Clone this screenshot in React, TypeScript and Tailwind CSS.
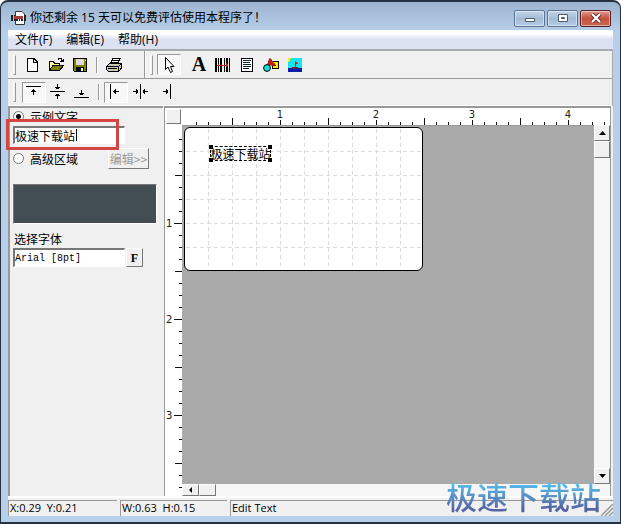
import { useLayoutEffect, useRef, useState } from "react";
import type { ReactNode } from "react";
import clsx from "clsx";

const PPI = 96;
const STEP = 12;
const MENUS = ["文件(F)", "编辑(E)", "帮助(H)"];

function ToolButton({ label, pressed, children }: { label: string; pressed?: boolean; children: ReactNode }) {
    return (
        <button
            type="button"
            aria-label={label}
            aria-pressed={pressed}
            className={clsx(
                "flex h-[21px] w-6 shrink-0 items-center justify-center",
                pressed && "border border-t-[#999] border-l-[#999] border-r-white border-b-white bg-[#f8f8f8]"
            )}
        >
            <svg width="16" height="16" viewBox="0 0 16 16" shapeRendering="crispEdges" className="shrink-0 overflow-visible">
                {children}
            </svg>
        </button>
    );
}

function Grip() {
    return <span className="h-5 w-[3px] shrink-0 border border-t-white border-l-white border-r-[#999] border-b-[#999]" />;
}

function Separator() {
    return <span className="mx-1 h-4 w-0.5 shrink-0 border-r border-l border-r-white border-l-[#999]" />;
}

// Number of ruler ticks that fit along the measured side of an element
function useTicks(side: "width" | "height") {
    const ref = useRef<HTMLDivElement>(null);
    const [count, setCount] = useState(0);

    useLayoutEffect(() => {
        const el = ref.current;
        if (!el) return;
        const measure = () => setCount(Math.floor((el.getBoundingClientRect()[side] - 6) / STEP));
        measure();
        const observer = new ResizeObserver(measure);
        observer.observe(el);
        return () => observer.disconnect();
    }, [side]);

    return { ref, ticks: Array.from({ length: Math.max(count, 0) }, (_, i) => i + 1) };
}

function HorizontalRuler() {
    const { ref, ticks } = useTicks("width");
    return (
        <div ref={ref} className="col-span-2 overflow-hidden">
            <svg width="100%" height="17" className="block">
                {ticks.map((n) => {
                    const x = 2 + n * STEP;
                    const top = n % 8 === 0 ? 12 : n % 4 === 0 ? 10 : 14;
                    return (
                        <g key={n}>
                            <rect x={x} y={top} width="1" height={17 - top} fill="#111" />
                            {n % 8 === 0 && (
                                <text x={x} y="10" textAnchor="middle" fontSize="10" fontFamily="'DejaVu Sans', sans-serif" fill="#222">
                                    {(n * STEP) / PPI}
                                </text>
                            )}
                        </g>
                    );
                })}
            </svg>
        </div>
    );
}

function VerticalRuler() {
    const { ref, ticks } = useTicks("height");
    return (
        <div ref={ref} className="relative row-span-2 overflow-hidden">
            <svg width="17" height="100%" className="absolute inset-0 block">
                {ticks.map((n) => {
                    const y = 2 + n * STEP;
                    const left = n % 8 === 0 ? 9 : n % 4 === 0 ? 10 : 14;
                    return (
                        <g key={n}>
                            <rect x={left} y={y} width={17 - left} height="1" fill="#111" />
                            {n % 8 === 0 && (
                                <text x="1" y={y + 4} fontSize="10" fontFamily="'DejaVu Sans', sans-serif" fill="#222">
                                    {(n * STEP) / PPI}
                                </text>
                            )}
                        </g>
                    );
                })}
            </svg>
        </div>
    );
}

function LabelCanvas() {
    const cols = [1, 2, 3, 4, 5, 6, 7, 8, 9];
    const rows = [1, 2, 3, 4, 5];
    return (
        <div className="relative min-h-0 min-w-0 overflow-hidden border-t border-[#999] bg-[#aaa]">
            {/* label sheet */}
            <div className="absolute top-px left-0.5 h-[144px] w-[239px] rounded-md border border-black bg-white">
                <svg width="237" height="142" className="block" shapeRendering="crispEdges" stroke="#dcdcdc" strokeDasharray="4 3">
                    {cols.map((c) => (
                        <path key={c} d={`M${c * 24 - 0.5} 1V141`} />
                    ))}
                    {rows.map((r) => (
                        <path key={r} d={`M1 ${r * 24 - 0.5}H236`} />
                    ))}
                </svg>
            </div>
            {/* selected text object */}
            <div className="absolute top-5 left-7 flex h-[15px] w-[61px] items-center justify-center border border-dashed border-black">
                <span className="text-[12px] leading-3 whitespace-nowrap">极速下载站</span>
                <i className="absolute -top-0.5 -left-0.5 size-1 bg-black" />
                <i className="absolute -top-0.5 -right-0.5 size-1 bg-black" />
                <i className="absolute -bottom-0.5 -left-0.5 size-1 bg-black" />
                <i className="absolute -right-0.5 -bottom-0.5 size-1 bg-black" />
            </div>
        </div>
    );
}

const RAISED = "border border-t-white border-l-white border-r-[#777] border-b-[#777] bg-[#f0f0f0]";
const SUNKEN = "border-t-2 border-l-2 border-r border-b border-t-[#777] border-l-[#777] border-r-white border-b-white";

function Sidebar() {
    return (
        <aside className="flex w-[155px] shrink-0 flex-col border-t-2 border-l-2 border-t-[#999] border-l-[#999] bg-[#f0f0f0] pl-[3px]">
            <div className="flex h-[13px] items-start overflow-hidden">
                <label className="flex items-center gap-1.5 leading-[17px]">
                    <input
                        type="radio"
                        name="source"
                        defaultChecked
                        className="size-[11px] appearance-none rounded-full border border-[#777] bg-white bg-[radial-gradient(circle,#000_2px,transparent_3px)]"
                    />
                    示例文字
                </label>
            </div>
            <div className="relative mt-[5px]">
                <input
                    aria-label="示例文字"
                    defaultValue="极速下载站"
                    className={clsx("block h-[18px] w-[112px] bg-white text-[12px] leading-[14px] text-black outline-none", SUNKEN)}
                />
                <span className="absolute top-[3px] left-[63px] h-3 w-px bg-black" />
                <span className="absolute -top-[7px] -left-[7px] h-[31px] w-[113px] border-3 border-[#d34644]" />
            </div>
            <div className="mt-1 flex h-[21px] items-center">
                <label className="flex w-[95px] items-center gap-1.5 leading-[15px]">
                    <input type="radio" name="source" className="size-[11px] appearance-none rounded-full border border-[#777] bg-white" />
                    高级区域
                </label>
                <button type="button" disabled className={clsx("h-[21px] w-[41px] text-[12px] leading-4 whitespace-nowrap text-[#999]", RAISED)}>
                    编辑&gt;&gt;
                </button>
            </div>
            <div className="mt-[15px] mr-1.5 h-10 border border-t-[#777] border-l-[#777] border-r-white border-b-white bg-[#434e52]" />
            <label htmlFor="font" className="mt-1.5 h-[18px] pl-px leading-[18px]">
                选择字体
            </label>
            <div className="flex gap-px">
                <input
                    id="font"
                    readOnly
                    defaultValue="Arial [8pt]"
                    className={clsx("h-[19px] w-[112px] bg-white font-['Liberation_Mono',monospace] text-[10px] leading-4 text-black outline-none", SUNKEN)}
                />
                <button type="button" className={clsx("h-[19px] w-[17px] font-['Liberation_Serif',serif] text-[12px] leading-4 font-bold", RAISED)}>
                    F
                </button>
            </div>
        </aside>
    );
}

function Editor() {
    return (
        <section className="ml-px grid min-w-0 flex-1 grid-cols-[17px_minmax(0,1fr)_16px] grid-rows-[17px_minmax(0,1fr)_12px] border-t-2 border-r border-l border-[#999] bg-white">
            <div className={clsx("m-px", RAISED)} />
            <HorizontalRuler />
            <VerticalRuler />
            <LabelCanvas />
            <div className="flex flex-col bg-[#f6f6f6]">
                <button type="button" aria-label="向上滚动" className={clsx("flex h-4 items-center justify-center", RAISED)}>
                    <svg width="7" height="4" viewBox="0 0 7 4"><path d="M3.5 0L7 4H0z" /></svg>
                </button>
                <div className={clsx("h-[17px]", RAISED)} />
                <button type="button" aria-label="向下滚动" className={clsx("mt-auto flex h-4 items-center justify-center", RAISED)}>
                    <svg width="7" height="4" viewBox="0 0 7 4"><path d="M0 0H7L3.5 4z" /></svg>
                </button>
            </div>
            <div className="col-span-2 flex bg-[#f6f6f6]">
                <button type="button" aria-label="向左滚动" className={clsx("flex w-[17px] items-center justify-center", RAISED)}>
                    <svg width="3" height="6" viewBox="0 0 3 6"><path d="M3 0V6L0 3z" /></svg>
                </button>
                <div className={clsx("w-[17px]", RAISED)} />
            </div>
        </section>
    );
}

function Toolbars() {
    return (
        <div className="shrink-0 border-t-2 border-r border-t-[#aaa] border-r-[#aaa] bg-[#f0f0f0]">
            <div className="flex h-7 items-center border-b border-[#999] pl-[5px]">
                <Grip />
                <div className="ml-1 flex items-center">
                    <ToolButton label="新建">
                        <path d="M3.5 1.5H10L13.5 5V14.5H3.5z" fill="#fff" stroke="#000" />
                        <path d="M9.5 1.5V5.5H13.5" fill="none" stroke="#000" />
                    </ToolButton>
                    <ToolButton label="打开">
                        <path d="M1.5 13.5V4.5H5L6.5 6H11.5V9" fill="#ffff9a" stroke="#000" />
                        <path d="M1.5 13.5L5 8.5H15.5L11.5 13.5z" fill="#808000" stroke="#000" />
                        <path d="M9.5 3.5L11 1.5H13L14.5 4.5M12 4.5H15V2" fill="none" stroke="#000" />
                    </ToolButton>
                    <ToolButton label="保存">
                        <path d="M1.5 1.5H14.5V14.5H2.5L1.5 13.5z" fill="#808000" stroke="#000" />
                        <path d="M4 2H12V8H4z" fill="#ddd" />
                        <path d="M4 10H12V15H4z" fill="#000" />
                        <path d="M9 11H11V14H9z" fill="#fff" />
                        <path d="M13 3H14V4H13z" fill="#fff" />
                    </ToolButton>
                    <Separator />
                    <ToolButton label="打印">
                        <path d="M4.5 6.5L7 1.5H14L11.5 6.5" fill="#fff" stroke="#000" />
                        <path d="M7 3.5H12M6 5.5H11" stroke="#000" />
                        <path d="M0.5 9.5L3.5 6.5H15.5V11L12.5 14.5H2.5L0.5 12.5z" fill="#c8c8b8" stroke="#000" />
                        <path d="M0.5 9.5H12.5V14.5M12.5 9.5L15.5 6.5M2 11.5H11" fill="none" stroke="#000" />
                        <path d="M9 12H11V13H9z" fill="#ee0" />
                    </ToolButton>
                </div>
                <span className="ml-[18px] h-full w-0.5 border-r border-l border-r-white border-l-[#999]" />
                <span className="w-1" />
                <Grip />
                <div className="ml-1 flex items-center">
                    <ToolButton label="选择" pressed>
                        <path d="M4.5 0.5V12.5L7 10L9.5 15.5L11.5 14.5L9.5 9.5H13z" fill="#fff" stroke="#000" shapeRendering="auto" />
                    </ToolButton>
                    <span className="w-1.5" />
                    <ToolButton label="文字">
                        <text x="8" y="14" textAnchor="middle" fontSize="20" fontWeight="700" fontFamily="'Liberation Serif', serif">A</text>
                    </ToolButton>
                    <ToolButton label="条形码">
                        <path d="M0 1H2V15H0zM3 1H4V15H3zM5 1H7V15H5zM9 1H10V15H9zM11 1H13V15H11zM14 1H15V15H14z" fill="#000" />
                        <path d="M2 8H13" stroke="#b82020" strokeWidth="1" />
                        <path d="M4 6V10L2 8zM11 6V10L13 8z" fill="#b82020" />
                    </ToolButton>
                    <ToolButton label="段落">
                        <path d="M2.5 1.5H13.5V14.5H2.5z" fill="#fff" stroke="#000" />
                        <path d="M4 3.5H12M4 5.5H11M4 7.5H12M4 9.5H12M4 11.5H10" stroke="#123" />
                    </ToolButton>
                    <ToolButton label="图形">
                        <path d="M9.5 4.5H15.5V11.5H9.5z" fill="#ffe600" stroke="#000" />
                        <path d="M7 1L13 9L4 8z" fill="#c3201c" stroke="#700" strokeWidth="0.5" />
                        <circle cx="4" cy="11" r="3.4" fill="#17dede" stroke="#000" shapeRendering="auto" />
                    </ToolButton>
                    <ToolButton label="图片">
                        <path d="M1 1H15V11H1z" fill="#18e4f0" />
                        <path d="M1 1H4L3 4L1 5z" fill="#ee2" />
                        <path d="M1 11H15V15H1z" fill="#0d1bab" />
                        <path d="M5 10H11L10 12H6z" fill="#802020" />
                        <path d="M8 4V10" stroke="#802020" />
                        <path d="M8 4L11 7H8z" fill="#d02020" />
                    </ToolButton>
                </div>
            </div>
            <div className="flex h-[27px] items-center border-b border-white pl-[5px]">
                <Grip />
                <div className="ml-1.5 flex items-center">
                    <ToolButton label="顶端对齐" pressed>
                        <path d="M0 2H15V3H0zM7 5H8V11H7zM6 6H9V7H6zM5 7H10V8H5z" />
                    </ToolButton>
                    <ToolButton label="垂直居中">
                        <path d="M0 7H15V8H0zM7 0H8V5H7zM5 3H10V4H5zM6 4H9V5H6zM7 10H8V15H7zM6 10H9V11H6zM5 11H10V12H5z" />
                    </ToolButton>
                    <ToolButton label="底端对齐">
                        <path d="M0 13H15V14H0zM7 6H8V11H7zM5 9H10V10H5zM6 10H9V11H6z" />
                    </ToolButton>
                </div>
                <Separator />
                <div className="flex items-center gap-px">
                    <ToolButton label="左对齐" pressed>
                        <path d="M2 0H3V15H2zM5 7H11V8H5zM6 6H7V9H6zM7 5H8V10H7z" />
                    </ToolButton>
                    <ToolButton label="水平居中">
                        <path d="M7 0H8V15H7zM0 7H5V8H0zM3 5H4V10H3zM4 6H5V9H4zM10 7H15V8H10zM10 6H11V9H10zM11 5H12V10H11z" />
                    </ToolButton>
                    <ToolButton label="右对齐">
                        <path d="M12 0H13V15H12zM5 7H10V8H5zM8 5H9V10H8zM9 6H10V9H9z" />
                    </ToolButton>
                </div>
            </div>
        </div>
    );
}

function TitleBar() {
    const caption = "flex h-[17px] w-[31px] items-center justify-center rounded-xs border shadow-[inset_0_0_0_1px_rgba(255,255,255,0.45)]";
    return (
        <header className="flex h-[28px] shrink-0 items-center pt-1 pl-0.5">
            <svg width="16" height="16" viewBox="0 0 16 16" className="ml-px shrink-0">
                <path d="M4.5 1.5H11L13.5 4V14.5H4.5z" fill="#fff" stroke="#333" />
                <path d="M0 5H2V11H0zM3 5H4V11H3zM5 6H7V11H5zM8 6H9V11H8zM10 6H12V11H10zM13 5H15V11H13z" fill="#222" />
                <path d="M3 6H12V9H3z" fill="#a04038" />
            </svg>
            <h1 className="ml-[3px] flex-1 truncate font-['Open_Sans','Noto_Sans_CJK_SC',sans-serif] text-[12px] leading-5 font-normal">
                你还剩余 15 天可以免费评估使用本程序了！
            </h1>
            <div className="mr-0.5 flex items-center gap-0.5">
                <button type="button" aria-label="最小化" className={clsx(caption, "border-[#5c7596] bg-linear-to-b from-[#c3d5e9] via-[#a4bbd6] to-[#b5cce5]")}>
                    <svg width="12" height="10" viewBox="0 0 12 10"><path d="M1.5 5.5H10.5V8.5H1.5z" fill="#fff" stroke="#4f5c6c" /></svg>
                </button>
                <button type="button" aria-label="最大化" className={clsx(caption, "border-[#5c7596] bg-linear-to-b from-[#c3d5e9] via-[#a4bbd6] to-[#b5cce5]")}>
                    <svg width="12" height="10" viewBox="0 0 12 10">
                        <path d="M1.5 1.5H10.5V8.5H1.5z" fill="#fff" stroke="#4f5c6c" />
                        <path d="M4.5 4.5H7.5V5.5H4.5z" fill="#9bb" stroke="#4f5c6c" />
                    </svg>
                </button>
                <button type="button" aria-label="关闭" className={clsx(caption, "border-[#551d24] bg-linear-to-b from-[#df9a8e] via-[#c5503e] to-[#c96a52]")}>
                    <svg width="12" height="10" viewBox="0 0 12 10">
                        <path d="M2 1L10 9M10 1L2 9" stroke="#693034" strokeWidth="4" />
                        <path d="M2 1L10 9M10 1L2 9" stroke="#fff" strokeWidth="2" />
                    </svg>
                </button>
            </div>
        </header>
    );
}

export default function App() {
    const pane = "h-4 border-t border-l border-[#999] pl-px";
    return (
        <div className="relative flex h-screen min-h-[400px] flex-col overflow-hidden rounded-t-lg border border-t-2 border-b-2 border-[#263144] bg-linear-to-b from-[#9cb4d0] to-[#b7cfe9] to-[30px] px-[7px] pb-1.5 font-['Noto_Sans_CJK_SC',sans-serif] text-[12px] text-black">
            <TitleBar />
            <nav className="flex h-[19px] shrink-0 items-center gap-3.5 bg-linear-to-b from-white from-20% to-[#dce2f1] to-50% pt-px pl-[7px] font-['Open_Sans','Noto_Sans_CJK_SC',sans-serif]">
                {MENUS.map((m) => (
                    <button key={m} type="button" className="text-[12px] leading-4">
                        {m}
                    </button>
                ))}
            </nav>
            <Toolbars />
            <main className="flex min-h-0 flex-1 bg-[#f0f0f0] pr-0.5">
                <Sidebar />
                <Editor />
            </main>
            <footer className="flex h-5 shrink-0 items-end gap-[3px] border-t-2 border-white bg-[#f0f0f0] font-['Open_Sans','Noto_Sans_CJK_SC',sans-serif] text-[11px] leading-[14px] whitespace-pre">
                <span className={clsx(pane, "w-[109px]")}>X:0.29  Y:0.21</span>
                <span className={clsx(pane, "w-[107px]")}>W:0.63  H:0.15</span>
                <span className={clsx(pane, "flex flex-1 justify-between")}>
                    Edit Text
                    <svg width="12" height="12" viewBox="0 0 12 12" stroke="#999" strokeWidth="1.5" className="self-end"><path d="M0 12L12 0M4 12L12 4M8 12L12 8" /></svg>
                </span>
            </footer>
            <div className="absolute right-[19px] bottom-2 bg-linear-to-b from-[#55b9e6] from-20% to-[#5464a5] to-85% bg-clip-text text-[31px] leading-9 font-medium text-transparent">
                极速下载站
            </div>
        </div>
    );
}
